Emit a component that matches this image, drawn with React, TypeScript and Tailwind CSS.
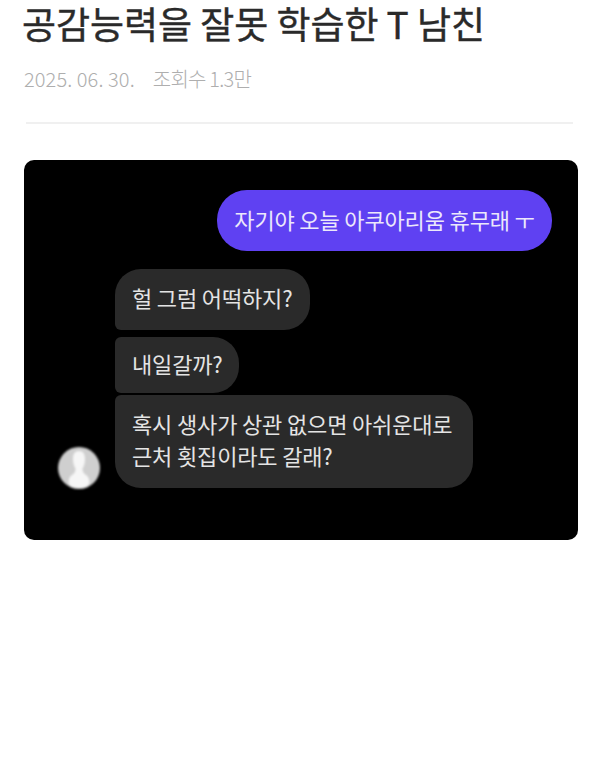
const font = "font-['Noto_Sans_CJK_KR','Noto_Sans',sans-serif]";

function Avatar() {
  return (
    <svg width="44" height="44" viewBox="0 0 44 44" className="shrink-0 blur-[0.8px] mb-[-2px]">
      <circle cx="22" cy="22" r="21" fill="#cfcfcf" />
      <path d="M22 5c-4.500 0-6 3.500-6 8 0 4 1 7.500 2.500 9.500 0 3-1 5-3.500 6.500-2 1.300-3 3-3.500 6.500 0 3 2 6.500 10.500 6.500s10.500-3.500 10.500-6.500c-.5-3.500-1.500-5.200-3.500-6.500-2.500-1.500-3.500-3.500-3.500-6.500 1.500-2 2.500-5.500 2.500-9.500 0-4.500-1.500-8-6-8z" fill="#f6f6f6" />
    </svg>
  );
}

export default function App() {
  return (
    <div className={`w-[600px] h-[762px] bg-white overflow-hidden ${font}`}>
      <h1 className="pl-[22px] h-[46px] text-[37px] leading-[46px] font-normal text-[#2a2a2a] whitespace-nowrap tracking-[-0.05px] [-webkit-text-stroke:0.4px_#2a2a2a]">
        공감능력을 잘못 학습한 T 남친
      </h1>
      <div className="pl-[24px] mt-[20px] h-[26px] flex items-center gap-[18px] text-[20px] leading-[26px] font-light text-[#aeaeae] whitespace-nowrap">
        <span className="tracking-[0.1px]">2025. 06. 30.</span>
        <span className="tracking-[-0.75px]">조회수 1.3만</span>
      </div>
      <div className="ml-[26px] mr-[27px] mt-[30px] h-[2px] bg-[#f0f0f0]" />
      <div className="ml-[24px] mt-[36px] w-[554px] h-[380px] bg-black rounded-[10px] pt-[30px] pr-[26px] pl-[33px] flex flex-col">
        <div className="self-end w-[335px] h-[61px] pb-[2px] rounded-[30px] bg-[#5f41f2] flex items-center justify-center text-[22px] tracking-[-0.15px] text-[#ece8fb] whitespace-nowrap">
          자기야 오늘 아쿠아리움 휴무래 ㅜ
        </div>
        <div className="mt-[18px] ml-[58px] w-[195px] h-[61px] pb-[4px] rounded-[26px] rounded-bl-[6px] bg-[#2a2a2a] flex items-center pl-[17px] text-[22px] tracking-[-0.15px] text-[#e4e4e4] whitespace-nowrap">
          헐 그럼 어떡하지?
        </div>
        <div className="mt-[7px] ml-[58px] w-[124px] h-[56px] pb-[4px] rounded-[26px] rounded-l-[6px] bg-[#2a2a2a] flex items-center pl-[17px] text-[22px] tracking-[-0.15px] text-[#e4e4e4] whitespace-nowrap">
          내일갈까?
        </div>
        <div className="mt-[2px] flex items-end gap-[14px]">
          <Avatar />
          <div className="w-[358px] h-[93px] pb-[5px] rounded-[26px] rounded-tl-[6px] bg-[#2a2a2a] flex flex-col justify-center pl-[17px] text-[22px] leading-[32px] tracking-[-0.15px] text-[#e4e4e4] whitespace-nowrap">
            <span>혹시 생사가 상관 없으면 아쉬운대로</span>
            <span>근처 횟집이라도 갈래?</span>
          </div>
        </div>
      </div>
    </div>
  );
}
